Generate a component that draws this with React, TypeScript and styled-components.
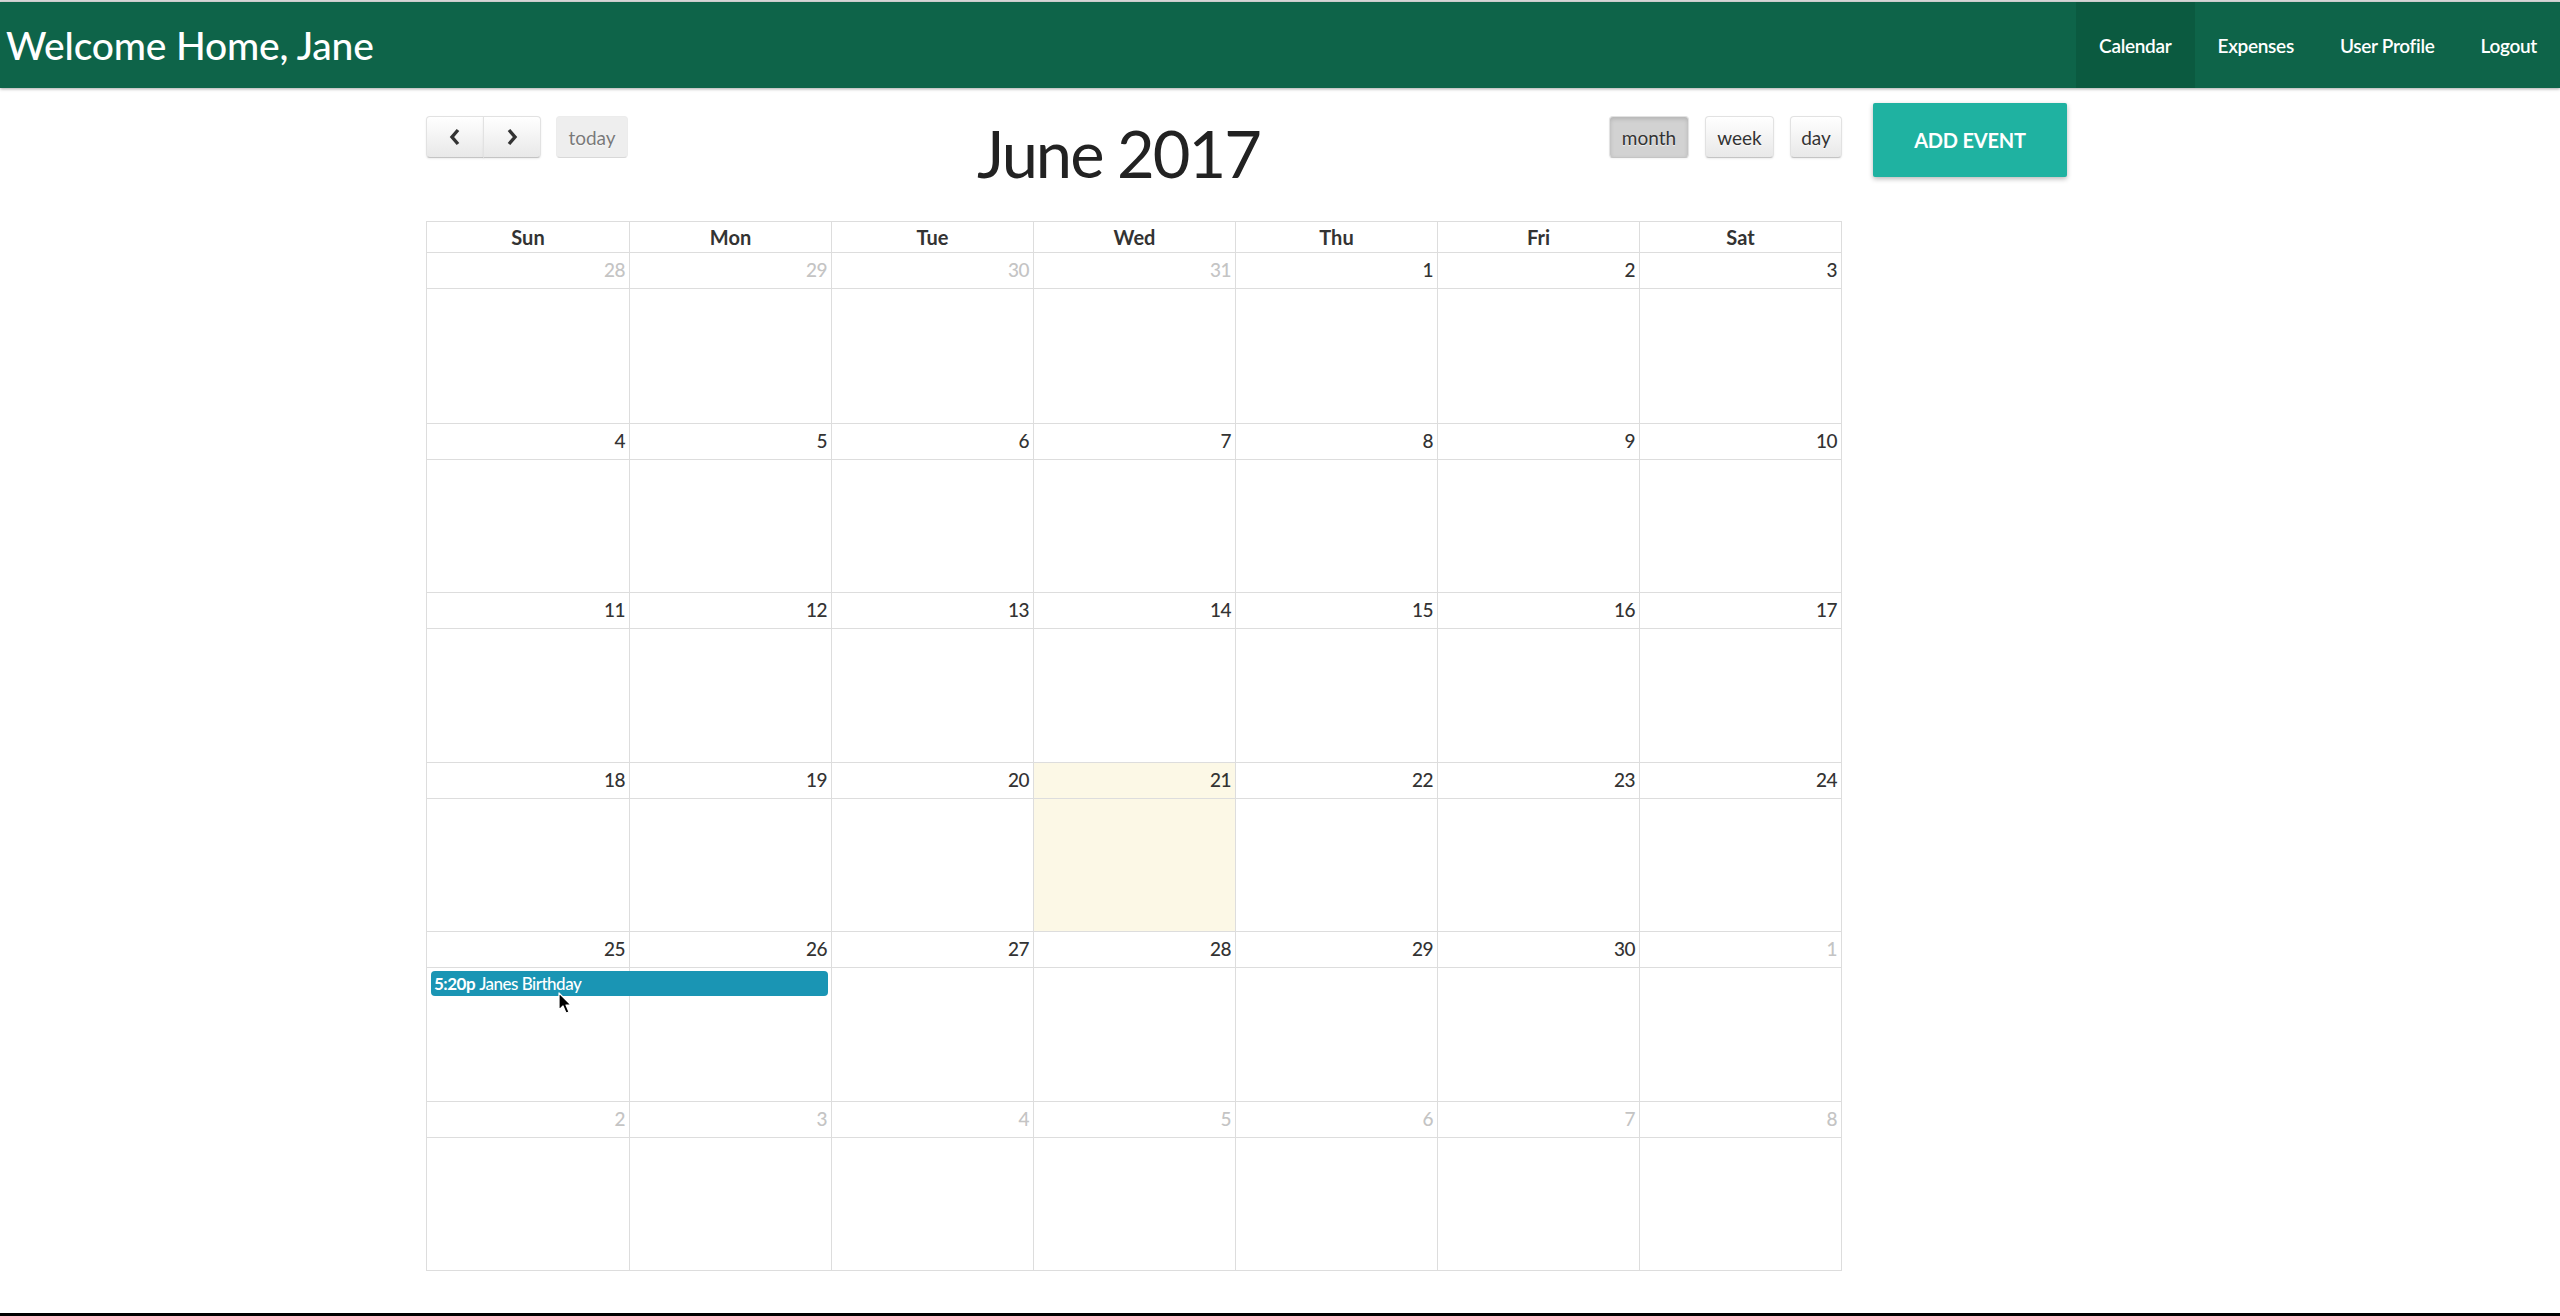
import React from "react";
import styled, { createGlobalStyle } from "styled-components";

const GlobalStyle = createGlobalStyle`
  html, body { margin: 0; padding: 0; background: #fff; }
  body { font-family: Lato, "Open Sans", "Liberation Sans", sans-serif; color: #333; }
  *, *::before, *::after { box-sizing: border-box; }
`;

const Page = styled.div`
  position: relative;
  min-height: 100vh;
  display: flex;
  flex-direction: column;
  border-top: 2px solid #d9d9d9;
`;

const NavBar = styled.header`
  position: relative;
  z-index: 2;
  height: 86px;
  display: flex;
  justify-content: space-between;
  align-items: stretch;
  background: #0e6449;
  box-shadow: 0 1px 3px rgba(0, 0, 0, 0.35);
`;

const Brand = styled.div`
  align-self: center;
  padding-left: 6px;
  color: #fff;
  font-size: 39px;
  font-weight: 500;
  letter-spacing: -0.2px;
`;

const NavList = styled.nav`
  display: flex;
`;

const NavItem = styled.a<{ $active?: boolean }>`
  display: flex;
  align-items: center;
  padding: 0 23px;
  color: #fff;
  font-size: 19px;
  font-weight: 600;
  letter-spacing: -0.3px;
  text-decoration: none;
  background: ${(p) => (p.$active ? "#0b5a40" : "transparent")};
`;

const Main = styled.main`
  flex: 1;
  display: flex;
  align-items: flex-start;
  gap: 31px;
  padding: 15px 0 0 426px;
`;

const CalendarCol = styled.section`
  width: 1416px;
  padding-top: 13px;
`;

const Toolbar = styled.div`
  height: 105px;
  display: flex;
  align-items: flex-start;
`;

const ToolGroup = styled.div<{ $gap: number }>`
  display: flex;
  gap: ${(p) => p.$gap}px;
`;

const Joined = styled.div`
  display: flex;
`;

const Title = styled.h2`
  flex: 1;
  margin: 5px 0 0;
  text-align: center;
  font-size: 65px;
  font-weight: 400;
  line-height: 1;
  letter-spacing: -2px;
  color: #222;
`;

type BtnProps = { $w: number; $state?: "active" | "disabled"; $join?: "left" | "right" };

const Btn = styled.button<BtnProps>`
  width: ${(p) => p.$w}px;
  height: 42px;
  padding: 0;
  display: flex;
  align-items: center;
  justify-content: center;
  font-family: inherit;
  font-size: 19px;
  color: #333;
  border: 1px solid;
  border-color: #e2e2e2 #e2e2e2 #c4c4c4;
  border-radius: ${(p) =>
    p.$join === "left" ? "4px 0 0 4px" : p.$join === "right" ? "0 4px 4px 0" : "4px"};
  margin-left: ${(p) => (p.$join === "right" ? "-1px" : "0")};
  background: ${(p) =>
    p.$state === "active"
      ? "#d2d2d2"
      : p.$state === "disabled"
      ? "#e6e6e6"
      : "linear-gradient(#ffffff, #e8e8e8)"};
  box-shadow: ${(p) =>
    p.$state === "active"
      ? "inset 0 2px 4px rgba(0,0,0,0.15), 0 1px 2px rgba(0,0,0,0.05)"
      : p.$state === "disabled"
      ? "none"
      : "inset 0 1px 0 rgba(255,255,255,0.2), 0 1px 2px rgba(0,0,0,0.08)"};
  opacity: ${(p) => (p.$state === "disabled" ? 0.65 : 1)};
  text-shadow: 0 1px 1px rgba(255, 255, 255, 0.75);
`;

const AddEvent = styled.button`
  width: 194px;
  height: 74px;
  border: none;
  border-radius: 2px;
  background: #1fb2a1;
  color: #fff;
  font-family: inherit;
  font-size: 20px;
  font-weight: 700;
  letter-spacing: -0.2px;
  box-shadow: 0 2px 5px rgba(0, 0, 0, 0.28);
`;

const Grid = styled.div`
  border: 1px solid #ddd;
`;

const HeadRow = styled.div`
  display: grid;
  grid-template-columns: repeat(7, 1fr);
  height: 31px;
  border-bottom: 1px solid #ddd;
`;

const HeadCell = styled.div`
  display: flex;
  align-items: center;
  justify-content: center;
  font-size: 20px;
  font-weight: 700;
  color: #333;
  & + & {
    border-left: 1px solid #ddd;
  }
`;

const WeekRow = styled.div`
  display: grid;
  grid-template-columns: repeat(7, 1fr);
  height: 169.5px;
  & + & {
    border-top: 1px solid #ddd;
  }
`;

const DayCell = styled.div<{ $col: number; $today?: boolean }>`
  grid-row: 1;
  grid-column: ${(p) => p.$col};
  display: flex;
  flex-direction: column;
  border-left: ${(p) => (p.$col > 1 ? "1px solid #ddd" : "none")};
  background: ${(p) => (p.$today ? "#fcf8e6" : "transparent")};
`;

const DayNumber = styled.div<{ $other?: boolean }>`
  height: 36px;
  padding: 0 4px;
  border-bottom: 1px solid #ddd;
  text-align: right;
  font-size: 19px;
  font-weight: 500;
  line-height: 34px;
  letter-spacing: -0.5px;
  color: ${(p) => (p.$other ? "#c4c4c4" : "#333")};
`;

const EventBar = styled.div<{ $start: number; $span: number }>`
  grid-row: 1;
  grid-column: ${(p) => p.$start} / span ${(p) => p.$span};
  align-self: start;
  z-index: 1;
  margin: 39px 3px 0 4px;
  height: 25px;
  padding: 0 3px;
  border-radius: 4px;
  background: #1a95b4;
  color: #fff;
  font-size: 17px;
  font-weight: 500;
  line-height: 25px;
  letter-spacing: -0.5px;
  white-space: nowrap;
  overflow: hidden;
`;

const EventTime = styled.b`
  font-weight: 700;
  margin-right: 4px;
`;

const Cursor = styled.svg`
  position: absolute;
  left: 558px;
  top: 990px;
  z-index: 5;
`;

const BottomBar = styled.div`
  height: 3px;
  background: #000;
`;

const Chevron = ({ dir }: { dir: "left" | "right" }) => (
  <svg width="14" height="20" viewBox="0 0 14 20">
    <polyline
      points={dir === "left" ? "10,3 4,10 10,17" : "4,3 10,10 4,17"}
      fill="none"
      stroke="#333"
      strokeWidth="3.4"
      strokeLinejoin="miter"
      strokeLinecap="butt"
    />
  </svg>
);

type Day = { n: number; other?: boolean; today?: boolean };

const weeks: Day[][] = [
  [{ n: 28, other: true }, { n: 29, other: true }, { n: 30, other: true }, { n: 31, other: true }, { n: 1 }, { n: 2 }, { n: 3 }],
  [4, 5, 6, 7, 8, 9, 10].map((n) => ({ n })),
  [11, 12, 13, 14, 15, 16, 17].map((n) => ({ n })),
  [18, 19, 20, 21, 22, 23, 24].map((n) => ({ n, today: n === 21 })),
  [{ n: 25 }, { n: 26 }, { n: 27 }, { n: 28 }, { n: 29 }, { n: 30 }, { n: 1, other: true }],
  [2, 3, 4, 5, 6, 7, 8].map((n) => ({ n, other: true })),
];

const dayNames = ["Sun", "Mon", "Tue", "Wed", "Thu", "Fri", "Sat"];

export default function App() {
  return (
    <>
      <GlobalStyle />
      <Page>
        <NavBar>
          <Brand>Welcome Home, Jane</Brand>
          <NavList>
            <NavItem $active>Calendar</NavItem>
            <NavItem>Expenses</NavItem>
            <NavItem>User Profile</NavItem>
            <NavItem>Logout</NavItem>
          </NavList>
        </NavBar>
        <Main>
          <CalendarCol>
            <Toolbar>
              <ToolGroup $gap={15}>
                <Joined>
                  <Btn $w={58} $join="left" aria-label="prev">
                    <Chevron dir="left" />
                  </Btn>
                  <Btn $w={58} $join="right" aria-label="next">
                    <Chevron dir="right" />
                  </Btn>
                </Joined>
                <Btn $w={72} $state="disabled">today</Btn>
              </ToolGroup>
              <Title>June 2017</Title>
              <ToolGroup $gap={16}>
                <Btn $w={80} $state="active">month</Btn>
                <Btn $w={69}>week</Btn>
                <Btn $w={52}>day</Btn>
              </ToolGroup>
            </Toolbar>
            <Grid>
              <HeadRow>
                {dayNames.map((d) => (
                  <HeadCell key={d}>{d}</HeadCell>
                ))}
              </HeadRow>
              {weeks.map((week, wi) => (
                <WeekRow key={wi}>
                  {week.map((d, di) => (
                    <DayCell key={di} $col={di + 1} $today={d.today}>
                      <DayNumber $other={d.other}>{d.n}</DayNumber>
                    </DayCell>
                  ))}
                  {wi === 4 && (
                    <EventBar $start={1} $span={2}>
                      <EventTime>5:20p</EventTime>Janes Birthday
                    </EventBar>
                  )}
                </WeekRow>
              ))}
            </Grid>
          </CalendarCol>
          <AddEvent>ADD EVENT</AddEvent>
        </Main>
        <BottomBar />
        <Cursor width="16" height="24" viewBox="0 0 16 24">
          <path
            d="M1 1 L1 18 L5 14 L8 21 L11 20 L8 13 L13 13 Z"
            fill="#000"
            stroke="#fff"
            strokeWidth="1.2"
            strokeLinejoin="round"
          />
        </Cursor>
      </Page>
    </>
  );
}
